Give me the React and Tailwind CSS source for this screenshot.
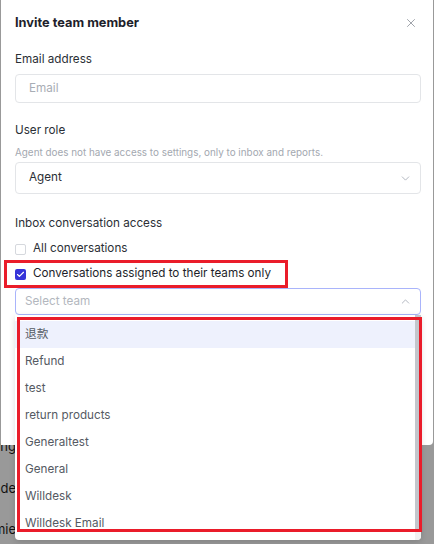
import { X, ChevronDown, ChevronUp, Check } from 'lucide-react';

const teams = ['退款', 'Refund', 'test', 'return products', 'Generaltest', 'General', 'Willdesk', 'Willdesk Email'];

export default function App() {
  return (
    <div
      className="relative w-[434px] h-[544px] overflow-hidden bg-white"
      style={{ fontFamily: 'Inter, "Noto Sans CJK SC", sans-serif' }}
    >
      {/* ── Page behind the modal ── */}
      <div className="pt-[436px] text-[13px] text-[#1f1f1f] leading-[20px]">
        <div className="w-[16px] overflow-hidden flex justify-end whitespace-nowrap"><span>Belong</span></div>
        <div className="mt-[22px] w-[16px] overflow-hidden flex justify-end whitespace-nowrap"><span>Grade</span></div>
        <div className="mt-[21px] w-[16px] overflow-hidden flex justify-end whitespace-nowrap"><span>Jamie</span></div>
      </div>

      {/* ── Backdrop ── */}
      <div className="absolute inset-0 bg-black/40" />

      {/* ── Modal ── */}
      <div className="absolute left-[1px] top-0 w-[432px] h-[445px] bg-white rounded-br-[4px] pl-[14px] pr-[12px] pt-[13px]">
        <div className="flex items-center justify-between h-[20px]">
          <h2 className="text-[12.8px] font-bold text-[#1e1f2b]">Invite team member</h2>
          <X className="w-[14px] h-[14px] text-[#8a8f98] mr-[3px]" strokeWidth={1.4} />
        </div>

        <p className="mt-[16px] text-[11.7px] leading-[20px] text-[#2b2f36]">Email address</p>
        <div className="mt-[5px] h-[29px] border border-[#e3e5e8] rounded-[4px] flex items-center px-[13px] text-[11.7px] text-[#a8adb5]">
          Email
        </div>

        <p className="mt-[17px] text-[11.7px] leading-[20px] text-[#2b2f36]">User role</p>
        <p className="mt-[4px] text-[9.9px] leading-[16px] text-[#a3a8b0]">
          Agent does not have access to settings, only to inbox and reports.
        </p>
        <div className="mt-[2px] h-[32px] border border-[#e3e5e8] rounded-[4px] flex items-center justify-between pl-[13px] pr-[8px] text-[11.7px] text-[#2b2f36]">
          <span>Agent</span>
          <ChevronDown className="w-[13px] h-[13px] text-[#9ca3af]" strokeWidth={1.4} />
        </div>

        <p className="mt-[19px] text-[11.7px] leading-[20px] text-[#2b2f36]">Inbox conversation access</p>

        <div className="mt-[6px] h-[20px] flex items-center gap-[7px]">
          <span className="w-[11px] h-[11px] border border-[#d5d8dd] rounded-[2px] bg-white" />
          <span className="text-[11.7px] text-[#2b2f36]">All conversations</span>
        </div>
        <div className="mt-[5px] h-[20px] flex items-center gap-[7px]">
          <span className="w-[11px] h-[11px] rounded-[2px] bg-[#3634d9] flex items-center justify-center">
            <Check className="w-[9px] h-[9px] text-white" strokeWidth={3} />
          </span>
          <span className="text-[11.7px] text-[#1e1f2b]">Conversations assigned to their teams only</span>
        </div>

        {/* Select team */}
        <div className="relative mt-[4px]">
          <div className="h-[27px] border border-[#a9b4fb] rounded-[4px] flex items-center justify-between pl-[9px] pr-[8px] text-[11.7px] text-[#b3b7be]">
            <span>Select team</span>
            <ChevronUp className="w-[13px] h-[13px] text-[#9ca3af]" strokeWidth={1.4} />
          </div>

          {/* Dropdown */}
          <div className="absolute left-0 right-0 top-full h-[225px] bg-white rounded-b-[4px] shadow-[0_2px_6px_rgba(0,0,0,0.15)] overflow-hidden flex">
            <ul className="flex-1 pt-[6px]">
              {teams.map((t, i) => (
                <li
                  key={t}
                  className={`h-[27px] flex items-center pl-[10px] text-[11.7px] text-[#555a63] ${i === 0 ? 'bg-[#eef1fd]' : ''}`}
                >
                  {t}
                </li>
              ))}
            </ul>
            <div className="w-[6px] bg-[#f1f1f1] flex flex-col">
              <div className="h-[215px] bg-[#c4c6cc]" />
            </div>
          </div>
        </div>
      </div>

      {/* ── Annotation boxes ── */}
      <div className="absolute left-[4px] top-[260px] w-[284px] h-[28px] border-[3px] border-[#ea1c2a]" />
      <div className="absolute left-[17px] top-[317px] w-[405px] h-[215px] border-[3px] border-[#ea1c2a]" />
    </div>
  );
}
